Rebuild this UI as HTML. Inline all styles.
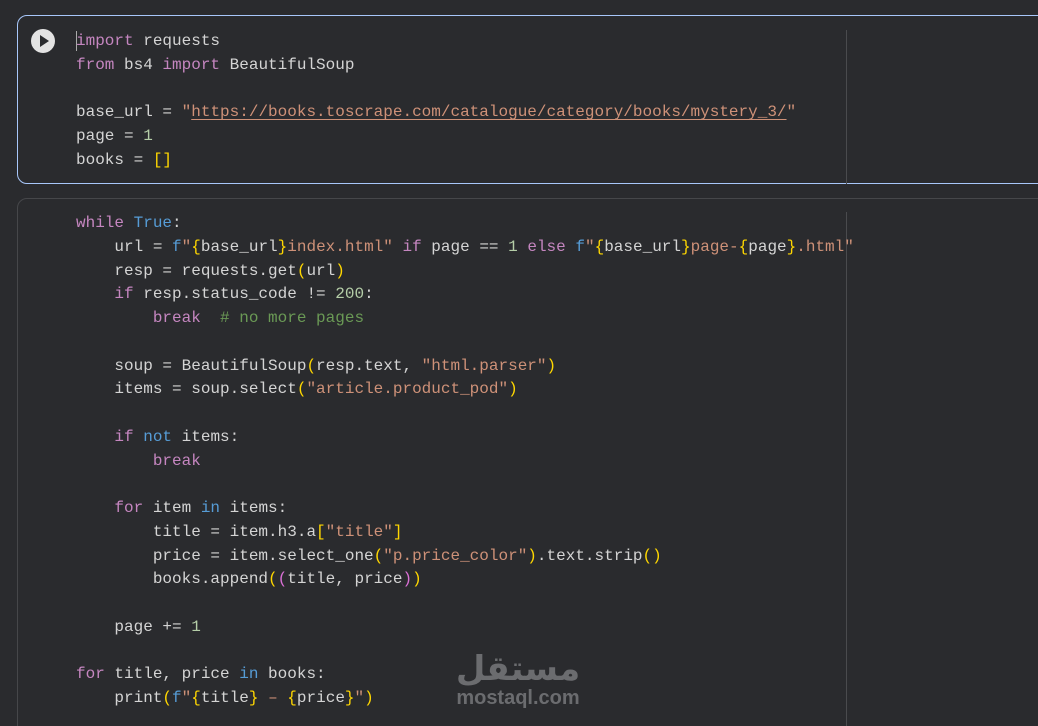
<!DOCTYPE html>
<html style="height:726px;overflow:hidden"><head><meta charset="utf-8"><style>
body{margin:0;width:1038px;height:726px;background:#2a2b2e;overflow:hidden;position:relative;font-family:"Liberation Mono",monospace;font-size:16px;color:#d4d4d4}
.c1{position:absolute;left:17px;top:15px;width:1040px;height:169px;border:1.5px solid #a8c7fa;border-radius:10px;box-sizing:border-box}
.c2{position:absolute;left:17px;top:198px;width:1040px;height:560px;border:1px solid #46474a;border-radius:10px;box-sizing:border-box}
.rule{position:absolute;left:846px;width:1px;background:#4a4b4e}
pre{position:absolute;left:76px;margin:0;font:inherit;line-height:23.75px;white-space:pre}
.k{color:#c586c0}.b{color:#569cd6}.s{color:#ce9178}.n{color:#b5cea8}.cm{color:#6a9955}.y{color:#ffd700}.p{color:#da70d6}
.u{text-decoration:underline;text-underline-offset:3px}
.run{position:absolute;left:31px;top:29px;width:24px;height:24px;border-radius:50%;background:#e3e3e3}
.run:after{content:"";position:absolute;left:9px;top:6px;border-left:9px solid #2a2b2e;border-top:6px solid transparent;border-bottom:6px solid transparent}
.cur{position:absolute;left:76px;top:31px;width:1px;height:20px;background:#aaa}
.wm{position:absolute;left:452px;top:646px;color:#6b6c6f;font-family:"Liberation Sans",sans-serif;text-align:center;width:132px}
</style></head><body>
<div class="c1"></div>
<div class="rule" style="top:30px;height:154px"></div>
<div class="run"></div>
<pre style="top:30px"><span class="k">import</span> requests
<span class="k">from</span> bs4 <span class="k">import</span> BeautifulSoup

base_url = <span class="s">"<span class="u">https://books.toscrape.com/catalogue/category/books/mystery_3/</span>"</span>
page = <span class="n">1</span>
books = <span class="y">[]</span></pre>
<div class="cur"></div>
<div class="c2"></div>
<div class="rule" style="top:212px;height:520px"></div>
<pre style="top:212px"><span class="k">while</span> <span class="b">True</span>:
    url = <span class="b">f</span><span class="s">"</span><span class="y">{</span>base_url<span class="y">}</span><span class="s">index.html"</span> <span class="k">if</span> page == <span class="n">1</span> <span class="k">else</span> <span class="b">f</span><span class="s">"</span><span class="y">{</span>base_url<span class="y">}</span><span class="s">page-</span><span class="y">{</span>page<span class="y">}</span><span class="s">.html"</span>
    resp = requests.get<span class="y">(</span>url<span class="y">)</span>
    <span class="k">if</span> resp.status_code != <span class="n">200</span>:
        <span class="k">break</span>  <span class="cm"># no more pages</span>

    soup = BeautifulSoup<span class="y">(</span>resp.text, <span class="s">"html.parser"</span><span class="y">)</span>
    items = soup.select<span class="y">(</span><span class="s">"article.product_pod"</span><span class="y">)</span>

    <span class="k">if</span> <span class="b">not</span> items:
        <span class="k">break</span>

    <span class="k">for</span> item <span class="b">in</span> items:
        title = item.h3.a<span class="y">[</span><span class="s">"title"</span><span class="y">]</span>
        price = item.select_one<span class="y">(</span><span class="s">"p.price_color"</span><span class="y">)</span>.text.strip<span class="y">()</span>
        books.append<span class="y">(</span><span class="p">(</span>title, price<span class="p">)</span><span class="y">)</span>

    page += <span class="n">1</span>

<span class="k">for</span> title, price <span class="b">in</span> books:
    print<span class="y">(</span><span class="b">f</span><span class="s">"</span><span class="y">{</span>title<span class="y">}</span><span class="s"> – </span><span class="y">{</span>price<span class="y">}</span><span class="s">"</span><span class="y">)</span></pre>
<div class="wm"><div style="font-family:'Noto Sans CJK SC','DejaVu Sans',sans-serif;font-size:34px;font-weight:bold;line-height:40px">مستقل</div><div style="font-size:20px;font-weight:bold;line-height:24px">mostaql.com</div></div>
</body></html>
